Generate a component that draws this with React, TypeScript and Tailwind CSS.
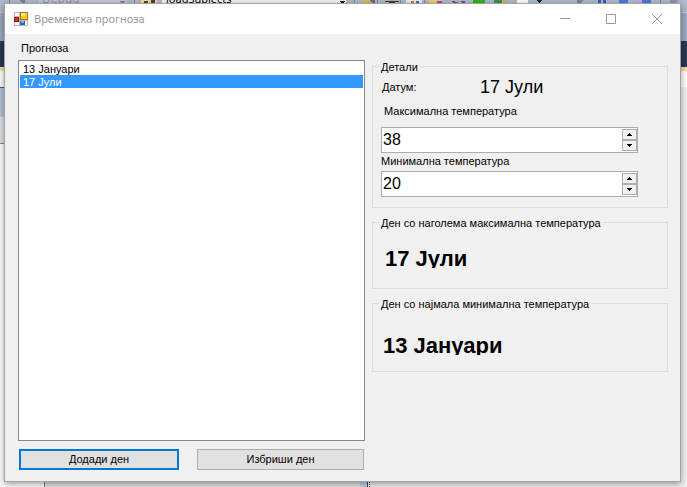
import { useState } from 'react';
import type { ReactNode } from 'react';

const days = ['13 Јануари', '17 Јули'];

function AppIcon() {
  return (
    <svg width="14" height="14" viewBox="0 0 14 14" shapeRendering="crispEdges" aria-hidden="true">
      <rect x="0" y="0" width="14" height="14" fill="#b9b6ae" />
      <rect x="1" y="1" width="4" height="3" fill="#fff" />
      <rect x="1" y="10" width="4" height="3" fill="#fff" />
      <rect x="11" y="9" width="2" height="4" fill="#fff" />
      <rect x="0" y="5" width="5" height="5" fill="#8e1712" />
      <rect x="1" y="6" width="3" height="3" fill="#d8362a" />
      <rect x="6" y="0" width="8" height="8" fill="#a67a10" />
      <rect x="7" y="1" width="6" height="6" fill="#f6c62c" />
      <rect x="7" y="1" width="4" height="3" fill="#fde58a" />
      <rect x="6" y="9" width="5" height="4" fill="#2c62c8" />
      <rect x="7" y="9" width="3" height="2" fill="#74a7f5" />
    </svg>
  );
}

/** Slice of the development environment that stays visible around the window. */
function Backdrop() {
  return (
    <div aria-hidden="true" className="absolute inset-0 flex flex-col overflow-hidden bg-[#f2f2f2]">
      <div className="relative h-[13px] shrink-0 border-b border-[#c3cbda] bg-[#b0bacc]">
        <svg className="absolute inset-x-0 top-0" width="687" height="4" viewBox="0 0 687 4" shapeRendering="crispEdges">
          <rect x="0" y="0" width="687" height="4" fill="#b1bbce" />
          <rect x="39" y="0" width="88" height="3" fill="#c3cad8" />
          <path d="M9 0h1v4h-1zM134 0h1v4h-1zM354 0h1v4h-1zM377 0h1v4h-1zM400 0h1v4h-1zM424 0h1v4h-1zM660 0h1v4h-1z" fill="#7f8ca5" />
          <path d="M20 0h5v3h-3zM119 1h6l-3 3z" fill="#7d8699" />
          <rect x="141" y="0" width="16" height="4" fill="#f2dc9a" />
          <path d="M144 1h4v2h-4zM151 0h4v3h-4z" fill="#4d4635" />
          <rect x="162" y="0" width="184" height="3" fill="#f3f4f6" />
          <path d="M339 1h6l-3 3z" fill="#1b1b1b" />
          <path d="M362 0h10v3h-10z" fill="#d9bb63" />
          <path d="M370 0h5v3h-3z" fill="#5b7290" />
          <path d="M385 1h14v1h-4v2h-6v-2h-4z" fill="#4b3d20" />
          <path d="M406 0h16v3h-16z" fill="#e8edf5" />
          <path d="M411 1h3v2h-3z" fill="#e46b2b" />
          <path d="M416 1h3v2h-3z" fill="#3a6bd0" />
          <path d="M429 0h13v3h-13z" fill="#efcf6e" />
          <path d="M437 1h5v2h-5z" fill="#a649b5" />
          <path d="M451 1h4v1h3v1h-5zM460 1h5v2h-3z" fill="#6f5a75" />
          <path d="M473 0h12v3h-12z" fill="#31b51b" />
          <path d="M494 0h8v3h-8z" fill="#3e8f50" />
          <path d="M503 0h4v2h-4z" fill="#e0b12e" />
          <path d="M517 0h11v3h-11z" fill="#fff" />
          <path d="M536 0h6l-3 3z" fill="#1b2745" />
          <path d="M577 0h6l-3 3h-3z" fill="#7d8699" />
          <path d="M598 0h3v3h-3zM603 0h3v3h-3z" fill="#3861c0" />
          <path d="M619 0h9v3h-9zM642 0h9v3h-9z" fill="#4d7cdd" />
          <path d="M670 0h8l-3 3h-5z" fill="#8f98a9" />
        </svg>
        <span className="absolute -top-[7px] left-[42px] font-['Noto_Sans',sans-serif] text-xs leading-3 text-[#8d93a1]">Debug</span>
        <span className="absolute -top-[7px] left-[166px] font-['Noto_Sans',sans-serif] text-[11px] leading-3 text-black">loadSubjects</span>
      </div>
      <div className="h-7 shrink-0 bg-[#9da9c0]" />
      <div className="h-[26px] shrink-0 bg-[#293955]" />
      <div className="h-1 shrink-0 bg-[#f8df9c]" />
      <div className="h-4 shrink-0 bg-white" />
      <div className="h-[30px] w-1 shrink-0 border-t border-[#555] bg-[#b6c5db]" />
      <div className="h-[27px] w-1 shrink-0 border-b border-[#888] bg-[#dfe3ea]" />
      <div className="flex grow">
        <div className="w-[45px] border-r border-[#7b8190] bg-white" />
        <div className="w-[315px] bg-[#e6e6e6]" />
        <div className="w-2 border-r border-[#444] bg-[#c3d3e6]" />
        <div className="w-[2px] border-r border-dotted border-[#444] bg-white" />
      </div>
    </div>
  );
}

function Group({ title, className, children }: { title: string; className: string; children: ReactNode }) {
  return (
    <fieldset className={`min-w-0 border border-[#dcdcdc] ${className}`}>
      <legend className="ml-[6px] h-3 px-[2px] leading-[14px]">{title}</legend>
      {children}
    </fieldset>
  );
}

function SpinButton({ label, up, onClick }: { label: string; up?: boolean; onClick: () => void }) {
  return (
    <button
      type="button"
      aria-label={label}
      onClick={onClick}
      className="flex flex-1 items-center justify-center border border-[#adadad] bg-[#f0f0f0]"
    >
      <svg width="5" height="3" viewBox="0 0 5 3" shapeRendering="crispEdges">
        <path d={up ? 'M2 0h1v1h1v1h1v1H0V2h1V1h1z' : 'M0 0h5v1H4v1H3v1H2V2H1V1H0z'} fill="#000" />
      </svg>
    </button>
  );
}

function NumberField({ id, initial }: { id: string; initial: number }) {
  const [value, setValue] = useState(initial);
  return (
    <div className="flex h-[26px] border border-[#abadb3] bg-white">
      <input
        id={id}
        type="text"
        inputMode="numeric"
        value={value}
        onChange={(e) => setValue(Number(e.target.value) || 0)}
        className="min-w-0 grow px-px text-base leading-5 outline-none"
      />
      <div className="my-px flex w-[15px] flex-col">
        <SpinButton label="Зголеми" up onClick={() => setValue(value + 1)} />
        <SpinButton label="Намали" onClick={() => setValue(value - 1)} />
      </div>
    </div>
  );
}

export default function App() {
  const [selected, setSelected] = useState(1);

  return (
    <div className="relative flex h-screen min-h-[400px] pt-[3px] pr-[6px] pb-[5px] pl-1 font-['Liberation_Sans',Arial,sans-serif] text-[11px] text-black">
      <Backdrop />
      <main className="relative flex min-w-0 grow flex-col border border-[#a3a3a3] bg-[#f0f0f0] shadow-[0_2px_7px_rgba(0,0,0,0.4)]">
        <header className="flex h-[30px] shrink-0 items-center bg-white pl-[9px]">
          <AppIcon />
          <h1 className="ml-[6px] grow font-['Noto_Sans',sans-serif] text-[11px] text-[#999]">Временска прогноза</h1>
          <button type="button" aria-label="Минимизирај" className="flex h-full w-[46px] items-center justify-center">
            <svg width="10" height="10" stroke="#999" fill="none"><path d="M0 4.5h10" /></svg>
          </button>
          <button type="button" aria-label="Максимизирај" className="flex h-full w-[46px] items-center justify-center">
            <svg width="10" height="10" stroke="#999" fill="none"><path d="M.5.5h9v9h-9z" /></svg>
          </button>
          <button type="button" aria-label="Затвори" className="flex h-full w-[46px] items-center justify-center">
            <svg width="10" height="10" stroke="#999" fill="none"><path d="M0 0l10 10M10 0L0 10" /></svg>
          </button>
        </header>

        <div className="flex min-h-0 grow gap-[7px] pt-[7px] pr-3 pb-[11px] pl-[13px]">
          <section className="flex w-[347px] shrink-0 flex-col">
            <h2 id="days" className="ml-[3px] h-[19px] leading-[14px]">Прогноза</h2>
            <ul role="listbox" aria-labelledby="days" className="grow border border-[#828790] bg-white p-px">
              {days.map((day, i) => (
                <li
                  key={day}
                  role="option"
                  aria-selected={i === selected}
                  onClick={() => setSelected(i)}
                  className={i === selected ? 'h-[13px] bg-[#3399ff] pl-[3px] leading-[14px] text-white' : 'h-[13px] pl-[3px] leading-[14px]'}
                >
                  {day}
                </li>
              ))}
            </ul>
            <div className="mt-2 flex gap-[18px] pr-px pl-px">
              <button type="button" className="h-[21px] w-[160px] border-2 border-[#0078d7] bg-[#e1e1e1]">Додади ден</button>
              <button type="button" className="h-[21px] grow border border-[#adadad] bg-[#e1e1e1]">Избриши ден</button>
            </div>
          </section>

          <section className="flex min-w-0 grow flex-col gap-2 pt-[19px]">
            <Group title="Детали" className="h-[148px]">
              <div className="flex h-[30px] items-center pl-2">
                <span className="w-[99px] pl-px">Датум:</span>
                <span className="text-lg leading-5">{days[selected]}</span>
              </div>
              <div className="ml-2 flex w-[257px] flex-col pt-[2px]">
                <label htmlFor="max" className="h-[23px] pl-[3px] leading-[14px]">Максимална температура</label>
                <NumberField id="max" initial={38} />
                <label htmlFor="min" className="h-[18px] leading-4">Минимална температура</label>
                <NumberField id="min" initial={20} />
              </div>
            </Group>
            <Group title="Ден со наголема максимална температура" className="h-[73px]">
              <p className="mt-[19px] ml-3 h-[21px] overflow-hidden text-[22px] leading-6 font-bold">17 Јули</p>
            </Group>
            <Group title="Ден со најмала минимална температура" className="h-[75px]">
              <p className="mt-[25px] ml-[10px] h-[21px] overflow-hidden text-[22px] leading-6 font-bold">13 Јануари</p>
            </Group>
          </section>
        </div>
      </main>
    </div>
  );
}
